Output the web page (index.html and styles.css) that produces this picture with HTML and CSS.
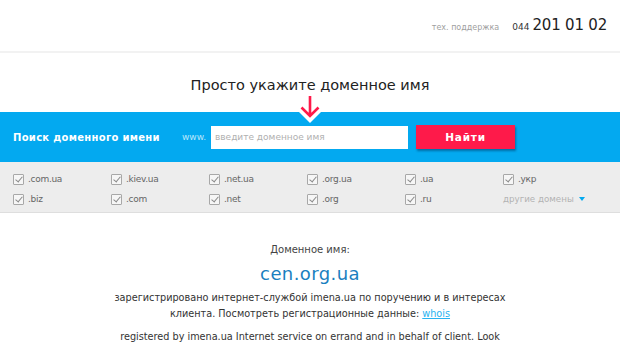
FILE: index.html
```html
<!DOCTYPE html>
<html lang="ru">
<head>
<meta charset="utf-8">
<title>cen.org.ua</title>
<link rel="stylesheet" href="styles.css">
</head>
<body>
<header class="top">
  <div class="support">
    <span class="support-label">тех. поддержка</span>
    <span class="support-code">044</span>
    <span class="support-phone">201 01 02</span>
  </div>
</header>
<h1 class="title">Просто укажите доменное имя</h1>
<div class="pointer">
  <svg class="arrow" width="22" height="24" viewBox="0 0 22 24"><path d="M11 1 V21 M2.5 12.5 L11 21 L19.5 12.5" fill="none" stroke="#fe1a4a" stroke-width="2.6"/></svg>
</div>
<section class="search">
  <span class="notch"></span>
  <span class="search-label">Поиск доменного имени</span>
  <span class="www">www.</span>
  <input class="field" type="text" placeholder="введите доменное имя">
  <button class="go">Найти</button>
</section>
<section class="zones">
  <label class="zone"><span class="box"></span>.com.ua</label>
  <label class="zone"><span class="box"></span>.kiev.ua</label>
  <label class="zone"><span class="box"></span>.net.ua</label>
  <label class="zone"><span class="box"></span>.org.ua</label>
  <label class="zone"><span class="box"></span>.ua</label>
  <label class="zone"><span class="box"></span>.укр</label>
  <label class="zone"><span class="box"></span>.biz</label>
  <label class="zone"><span class="box"></span>.com</label>
  <label class="zone"><span class="box"></span>.net</label>
  <label class="zone"><span class="box"></span>.org</label>
  <label class="zone"><span class="box"></span>.ru</label>
  <span class="more">другие домены <span class="caret"></span></span>
</section>
<main class="info">
  <p class="info-label">Доменное имя:</p>
  <p class="domain">cen.org.ua</p>
  <p class="text">зарегистрировано интернет-службой imena.ua по поручению и в интересах клиента. Посмотреть регистрационные данные: <a href="#">whois</a></p>
  <p class="text">registered by imena.ua Internet service on errand and in behalf of client. Look up registration data: <a href="#">whois</a></p>
</main>
</body>
</html>
```
FILE: styles.css
```css
* { box-sizing: border-box; }
html, body { margin: 0; padding: 0; }
body {
  font-family: "DejaVu Sans", "Noto Sans", sans-serif;
  color: #333;
  background: #fff;
  overflow: hidden;
  height: 343px;
}
.top {
  height: 53px;
  border-bottom: 2px solid #f2f2f2;
  display: flex;
  justify-content: flex-end;
  align-items: flex-start;
  padding: 16px 13px 0 0;
}
.support { display: flex; align-items: baseline; }
.support-label { font-size: 8px; color: #a0a0a0; margin-right: 13px; }
.support-code { font-size: 9px; color: #333; margin-right: 3px; }
.support-phone { font-size: 15px; color: #222; letter-spacing: -0.2px; }
.title {
  margin: 22px 0 0;
  text-align: center;
  font-size: 14.5px;
  font-weight: normal;
  color: #222;
  line-height: 20px;
}
.pointer {
  display: flex;
  justify-content: center;
  height: 17px;
  position: relative;
  z-index: 2;
}
.search {
  position: relative;
  height: 50px;
  background: #03a9f0;
  display: flex;
  align-items: center;
  padding-left: 13px;
}
.notch {
  position: absolute;
  left: 299px;
  top: 0;
  width: 0;
  height: 0;
  border-left: 11px solid transparent;
  border-right: 11px solid transparent;
  border-top: 11px solid #fff;
}
.search-label { color: #fff; font-weight: bold; font-size: 10px; width: 169px; letter-spacing: 0.3px; }
.www { color: #b9e6fb; font-size: 9px; width: 29px; }
.field {
  width: 197px;
  height: 23px;
  border: 0;
  padding: 0 0 0 4px;
  margin: 0 8px 0 0;
  font-family: inherit;
  font-size: 9px;
  color: #333;
  background: #fff;
  outline: none;
}
.field::placeholder { color: #b0b0b0; }
.go {
  width: 99px;
  height: 24px;
  border: 0;
  background: #fe1a4a;
  color: #fff;
  font-family: inherit;
  font-weight: bold;
  font-size: 10.5px;
  letter-spacing: 0.8px;
  box-shadow: 1px 2px 2px rgba(0, 40, 80, 0.45);
  padding: 0;
}
.zones {
  background: #ededed;
  border-bottom: 1px solid #dedede;
  height: 51px;
  padding: 9px 0 0 13px;
  display: grid;
  grid-template-columns: repeat(6, 98px);
  grid-auto-rows: 20px;
}
.zone {
  display: flex;
  align-items: center;
  font-size: 9px;
  color: #666;
  letter-spacing: -0.3px;
  height: 16px;
}
.box {
  width: 11px;
  height: 11px;
  border: 1px solid #a8a8a8;
  border-radius: 1px;
  background: #f6f6f6;
  margin-right: 4px;
  position: relative;
}
.box::after {
  content: "";
  position: absolute;
  left: 3px;
  top: 0px;
  width: 3px;
  height: 6px;
  border-right: 1.3px solid #8a8a8a;
  border-bottom: 1.3px solid #8a8a8a;
  transform: rotate(40deg);
}
.more {
  font-size: 8.7px;
  color: #b3b3b3;
  display: flex;
  align-items: center;
  height: 16px;
}
.caret {
  width: 0;
  height: 0;
  margin-left: 5px;
  border-left: 3.5px solid transparent;
  border-right: 3.5px solid transparent;
  border-top: 4px solid #03a9f0;
}
.info {
  text-align: center;
  padding-top: 30px;
}
.info p { margin: 0; }
.info-label { font-size: 10px; color: #444; line-height: 14px; }
.domain {
  font-size: 18px;
  color: #1a7fc0;
  letter-spacing: 0.4px;
  line-height: 24px;
  margin-top: 5px !important;
}
.text {
  font-size: 9.7px;
  color: #333;
  line-height: 16px;
  max-width: 394px;
  margin: 4px auto 0 !important;
}
.text + .text { margin-top: 7px !important; }
.text a { color: #29b3f0; }
```
